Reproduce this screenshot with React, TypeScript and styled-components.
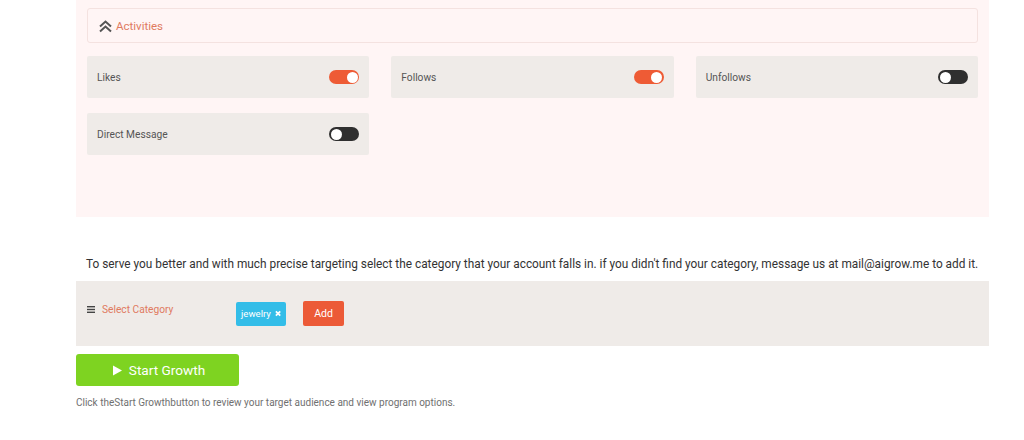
import React from "react";
import styled, { createGlobalStyle } from "styled-components";

const Global = createGlobalStyle`
  html, body { margin: 0; padding: 0; background: #ffffff; }
  body { font-family: Roboto, "Noto Sans", Arial, sans-serif; }
  * { box-sizing: border-box; }
`;

const Page = styled.div`
  width: 1024px;
  height: 440px;
  padding-left: 76px;
  overflow: hidden;
`;

const Column = styled.div`
  width: 913px;
  display: flex;
  flex-direction: column;
`;

const Panel = styled.section`
  height: 217px;
  background: #fff5f5;
  padding: 8px 11px 0 11px;
  display: flex;
  flex-direction: column;
`;

const Header = styled.div`
  height: 35px;
  border: 1px solid #f4e2e0;
  border-radius: 3px;
  display: flex;
  align-items: center;
  padding: 1px 0 0 10px;
  gap: 3px;
  color: #e07a5f;
  font-size: 11.5px;
`;

const Grid = styled.div`
  margin-top: 13px;
  display: grid;
  grid-template-columns: repeat(3, 1fr);
  column-gap: 22px;
  row-gap: 15px;
`;

const Card = styled.div`
  height: 42px;
  background: #efebe8;
  border-radius: 2px;
  display: flex;
  align-items: center;
  justify-content: space-between;
  padding: 0 10px 0 10px;
  font-size: 10.2px;
  color: #555;
`;

const Toggle = styled.span<{ $on: boolean }>`
  width: 30px;
  height: 14px;
  border-radius: 7px;
  background: ${(p) => (p.$on ? "#ee5b35" : "#2f2f2f")};
  position: relative;
  display: inline-block;
  &::after {
    content: "";
    position: absolute;
    top: 1.5px;
    left: ${(p) => (p.$on ? "17.5px" : "1.5px")};
    width: 11px;
    height: 11px;
    border-radius: 50%;
    background: #fff;
  }
`;

const Description = styled.p`
  margin: 38px 0 0 10px;
  font-size: 11.85px;
  line-height: 18px;
  white-space: nowrap;
  color: #333;
`;

const CategoryBox = styled.div`
  margin-top: 8px;
  height: 65px;
  background: #efebe8;
  display: flex;
  align-items: flex-start;
  padding: 20px 0 0 11px;
`;

const Label = styled.div`
  width: 149px;
  display: flex;
  align-items: center;
  gap: 7px;
  height: 16px;
  color: #e07a5f;
  font-size: 10.2px;
`;

const Tag = styled.span`
  height: 24px;
  background: #33bde8;
  color: #fff;
  border-radius: 2px;
  font-size: 9.6px;
  padding: 0 5px;
  display: inline-flex;
  align-items: center;
  gap: 4px;
  width: 50px;
`;

const AddButton = styled.button`
  margin-left: 17px;
  height: 25px;
  width: 41px;
  background: #ec5a37;
  color: #fff;
  border: 0;
  border-radius: 2px;
  font-family: inherit;
  font-size: 10.5px;
  padding: 0;
`;

const TagRow = styled.div`
  display: flex;
  align-items: center;
`;

const StartButton = styled.button`
  margin-top: 8px;
  width: 163px;
  height: 32px;
  background: #7ed321;
  color: #fff;
  border: 0;
  border-radius: 3px;
  font-family: inherit;
  font-size: 13.6px;
  display: flex;
  align-items: center;
  justify-content: center;
  gap: 6px;
  padding: 0 0 0 2px;
`;

const Footnote = styled.p`
  margin: 10px 0 0 0;
  font-size: 10px;
  line-height: 14px;
  color: #707070;
`;

const activities = [
  { name: "Likes", on: true },
  { name: "Follows", on: true },
  { name: "Unfollows", on: false },
  { name: "Direct Message", on: false },
];

export default function App() {
  return (
    <Page>
      <Global />
      <Column>
        <Panel>
          <Header>
            <svg width="15" height="15" viewBox="0 0 15 15">
              <path d="M2 7.5 L7.5 2.5 L13 7.5" fill="none" stroke="#555" strokeWidth="2" />
              <path d="M2 12.5 L7.5 7.5 L13 12.5" fill="none" stroke="#555" strokeWidth="2" />
            </svg>
            Activities
          </Header>
          <Grid>
            {activities.map((a) => (
              <Card key={a.name}>
                {a.name}
                <Toggle $on={a.on} />
              </Card>
            ))}
          </Grid>
        </Panel>
        <Description>
          To serve you better and with much precise targeting select the category that your account falls in. if you didn't find your category, message us at mail@aigrow.me to add it.
        </Description>
        <CategoryBox>
          <Label>
            <svg width="8" height="7" viewBox="0 0 8 7">
              <rect x="0" y="0" width="8" height="1.4" fill="#444" />
              <rect x="0" y="2.8" width="8" height="1.4" fill="#444" />
              <rect x="0" y="5.6" width="8" height="1.4" fill="#444" />
            </svg>
            Select Category
          </Label>
          <TagRow>
            <Tag>
              jewelry
              <svg width="7" height="7" viewBox="0 0 7 7">
                <path d="M1 1 L6 6 M6 1 L1 6" stroke="#fff" strokeWidth="2" />
              </svg>
            </Tag>
            <AddButton>Add</AddButton>
          </TagRow>
        </CategoryBox>
        <StartButton>
          <svg width="11" height="11" viewBox="0 0 11 11">
            <path d="M1 0.5 L10 5.5 L1 10.5 Z" fill="#fff" />
          </svg>
          Start Growth
        </StartButton>
        <Footnote>
          Click theStart Growthbutton to review your target audience and view program options.
        </Footnote>
      </Column>
    </Page>
  );
}
